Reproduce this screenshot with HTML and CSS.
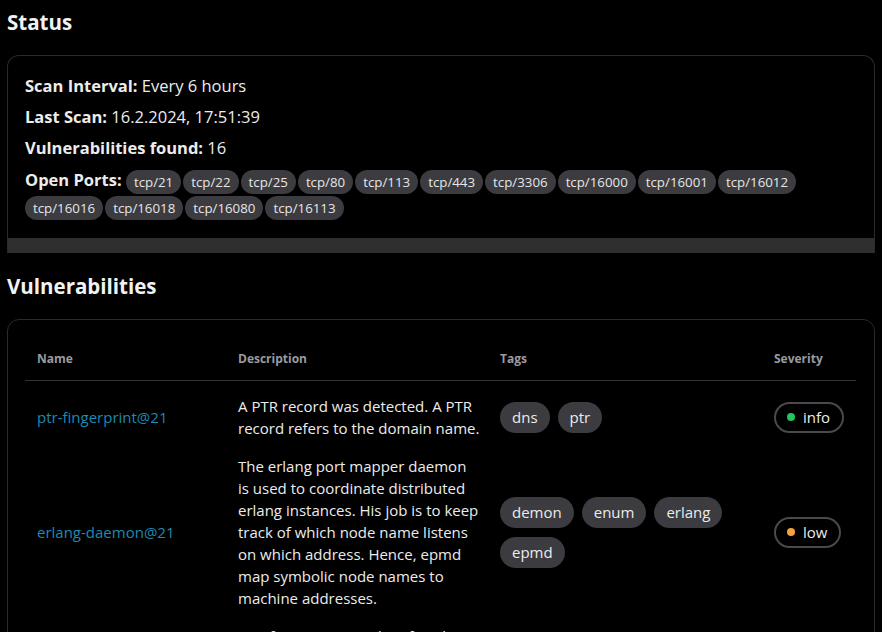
FILE: index.html
```html
<!DOCTYPE html>
<html lang="en">
<head>
    <meta charset="UTF-8">
    <meta name="viewport" content="width=device-width, initial-scale=1.0">
    <title>Scan Result</title>
    <link rel="stylesheet" href="styles.css">
</head>
<body>
    <h2 class="first">Status</h2>
    <div class="card status">
        <div class="status-body">
            <p><b>Scan Interval:</b> Every 6 hours</p>
            <p><b>Last Scan:</b> 16.2.2024, 17:51:39</p>
            <p><b>Vulnerabilities found:</b> 16</p>
            <p class="ports"><b>Open Ports:</b> <span class="port">tcp/21</span><span class="port">tcp/22</span><span class="port">tcp/25</span><span class="port">tcp/80</span><span class="port">tcp/113</span><span class="port">tcp/443</span><span class="port">tcp/3306</span><span class="port">tcp/16000</span><span class="port">tcp/16001</span><span class="port">tcp/16012</span><span class="port">tcp/16016</span><span class="port">tcp/16018</span><span class="port">tcp/16080</span><span class="port">tcp/16113</span></p>
        </div>
        <div class="scrollbar"></div>
    </div>

    <h2>Vulnerabilities</h2>
    <div class="card vulns">
        <table>
            <colgroup>
                <col class="col-name">
                <col class="col-desc">
                <col class="col-tags">
                <col class="col-sev">
            </colgroup>
            <thead>
                <tr>
                    <th>Name</th>
                    <th>Description</th>
                    <th>Tags</th>
                    <th>Severity</th>
                </tr>
            </thead>
            <tbody>
                <tr>
                    <td><a href="#">ptr-fingerprint@21</a></td>
                    <td class="desc">A PTR record was detected. A PTR record refers to the domain name.</td>
                    <td><div class="tags"><span class="tag">dns</span><span class="tag">ptr</span></div></td>
                    <td><span class="severity"><span class="dot info"></span>info</span></td>
                </tr>
                <tr>
                    <td><a href="#">erlang-daemon@21</a></td>
                    <td class="desc">The erlang port mapper daemon is used to coordinate distributed erlang instances. His job is to keep track of which node name listens on which address. Hence, epmd map symbolic node names to machine addresses.</td>
                    <td><div class="tags"><span class="tag">demon</span><span class="tag">enum</span><span class="tag">erlang</span><span class="tag">epmd</span></div></td>
                    <td><span class="severity"><span class="dot low"></span>low</span></td>
                </tr>
                <tr>
                    <td><a href="#">ssh-fingerprint@22</a></td>
                    <td class="desc">SSH fingerprinting identifies the running server software and version.</td>
                    <td><div class="tags"><span class="tag">ssh</span></div></td>
                    <td><span class="severity"><span class="dot info"></span>info</span></td>
                </tr>
            </tbody>
        </table>
    </div>
</body>
</html>
```

FILE: styles.css
```css
body {
    margin: 0;
    padding: 0 7px;
    background: #000;
    color: #ececec;
    font-family: "Open Sans", "Noto Sans", sans-serif;
}
h2 {
    font-size: 20.5px;
    line-height: 28px;
    font-weight: 700;
    color: #f2f2f2;
    margin: 19px 0;
}
h2.first {
    margin-top: 8px;
}
.card {
    border: 1px solid #2a2a2a;
    border-radius: 12px;
}
.status {
    border-bottom: none;
    border-radius: 12px 12px 0 0;
    overflow: hidden;
}
.status-body {
    padding: 18px 17px 18px;
}
.status p {
    margin: 0 0 7px;
    font-size: 16.5px;
    line-height: 24px;
}
.status p.ports {
    margin: 0;
    line-height: 26px;
}
.port {
    display: inline-block;
    height: 24px;
    line-height: 24px;
    padding: 0 8px;
    margin-right: 2px;
    border-radius: 12px;
    background: #3b3b40;
    color: #e6e6e6;
    font-size: 13.3px;
    vertical-align: middle;
}
.scrollbar {
    height: 15px;
    background: #2f2f2f;
}
.vulns {
    padding: 18px 18px 0 17px;
}
table {
    width: 100%;
    border-collapse: collapse;
    table-layout: fixed;
}
.col-name { width: 201px; }
.col-desc { width: 262px; }
.col-tags { width: 274px; }
.col-sev { width: 94px; }
th {
    text-align: left;
    font-size: 12px;
    line-height: 18px;
    font-weight: 700;
    color: #9a9aa0;
    padding: 12px 12px;
    border-bottom: 1px solid #333;
}
td {
    font-size: 15px;
    line-height: 22px;
    color: #ececec;
    padding: 8px 12px;
    vertical-align: middle;
}
td.desc {
    padding-right: 7px;
}
tbody tr:first-child td {
    padding-top: 14px;
}
td a {
    color: #1c8ab2;
    text-decoration: none;
}
.tags {
    display: flex;
    flex-wrap: wrap;
    gap: 9px 8px;
}
.tag {
    height: 31px;
    line-height: 31px;
    padding: 0 12px;
    border-radius: 16px;
    background: #3b3b40;
    color: #ececec;
}
.severity {
    display: inline-flex;
    align-items: center;
    gap: 8px;
    height: 27px;
    padding: 0 12px 0 11px;
    border: 2px solid #4a4a4e;
    border-radius: 16px;
}
.dot {
    width: 8px;
    height: 8px;
    border-radius: 50%;
}
.dot.info { background: #22c55e; }
.dot.low { background: #f5a23a; }
```
